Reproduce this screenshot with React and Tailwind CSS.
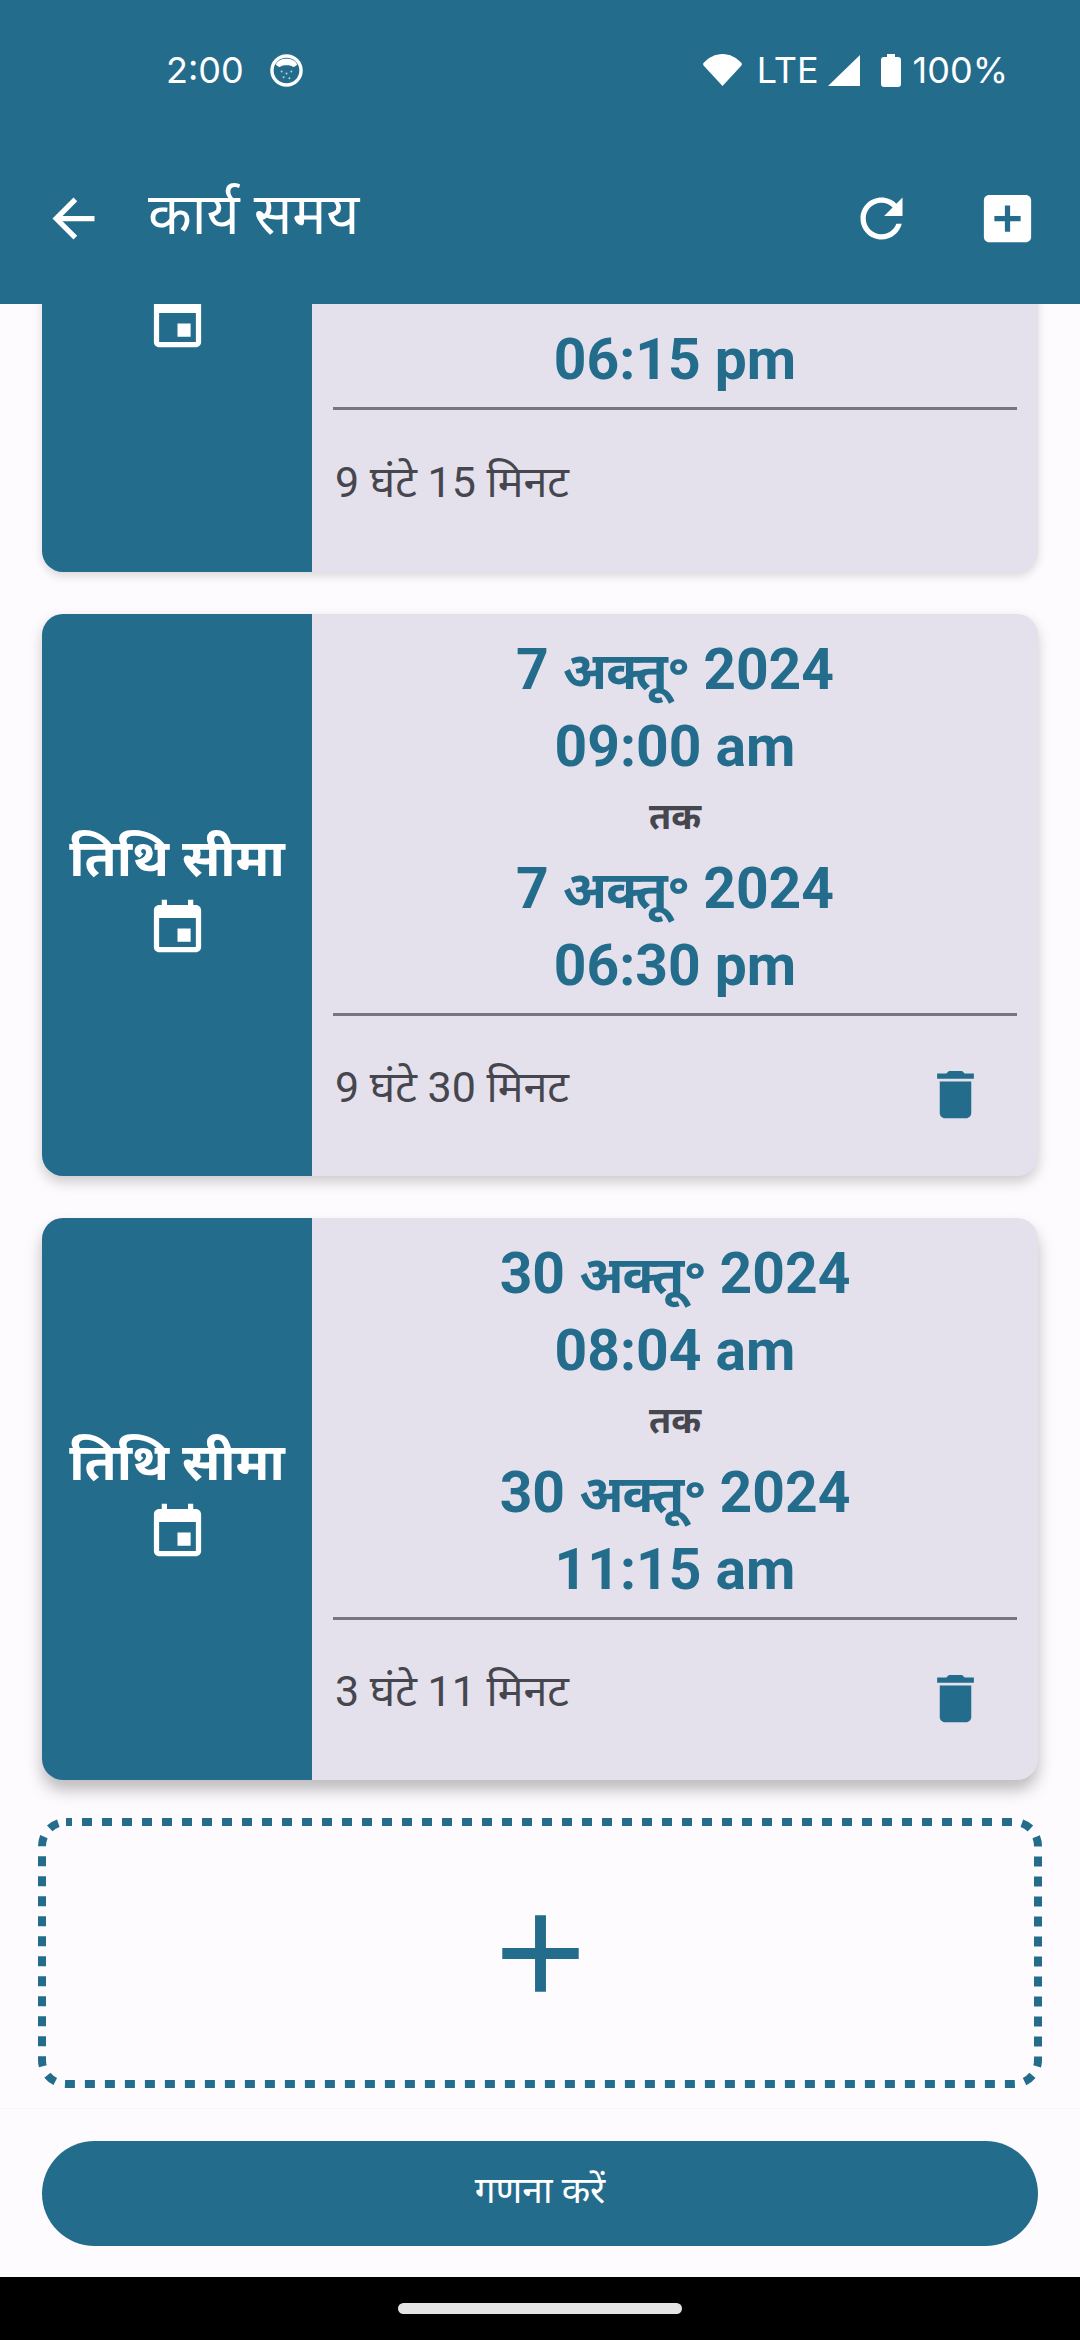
function Icono({ d, className }) {
  return (
    <svg viewBox="0 0 24 24" className={className} fill="currentColor">
      <path d={d} />
    </svg>
  );
}

const ICONOS = {
  atras: 'M20 11H7.83l5.59-5.59L12 4l-8 8 8 8 1.41-1.41L7.83 13H20v-2z',
  refrescar: 'M17.65 6.35C16.2 4.9 14.21 4 12 4c-4.42 0-7.99 3.58-7.99 8s3.57 8 7.99 8c3.73 0 6.84-2.55 7.73-6h-2.08c-.82 2.33-3.04 4-5.65 4-3.31 0-6-2.69-6-6s2.69-6 6-6c1.66 0 3.14.69 4.22 1.78L13 11h7V4l-2.35 2.35z',
  agregarCaja: 'M19 3H5c-1.11 0-2 .9-2 2v14c0 1.1.89 2 2 2h14c1.1 0 2-.9 2-2V5c0-1.1-.9-2-2-2zm-2 10h-4v4h-2v-4H7v-2h4V7h2v4h4v2z',
  evento: 'M17 12h-5v5h5v-5zM16 1v2H8V1H6v2H5c-1.11 0-1.99.9-1.99 2L3 19c0 1.1.89 2 2 2h14c1.1 0 2-.9 2-2V5c0-1.1-.9-2-2-2h-1V1h-2zm3 18H5V8h14v11z',
  borrar: 'M6 19c0 1.1.9 2 2 2h8c1.1 0 2-.9 2-2V7H6v12zM19 4h-3.5l-1-1h-5l-1 1H5v2h14V4z',
  mas: 'M19 13h-6v6h-2v-6H5v-2h6V5h2v6h6v2z',
};

// La sombra crece hacia abajo, igual que en la captura
const rangos = [
  { dia: '7', mes: 'सित॰', inicio: '09:00 am', fin: '06:15 pm', duracion: '9 घंटे 15 मिनट', borrar: false, sombra: 'shadow-[0_4px_10px_rgba(0,0,0,0.14)]' },
  { dia: '7', mes: 'अक्तू॰', inicio: '09:00 am', fin: '06:30 pm', duracion: '9 घंटे 30 मिनट', borrar: true, sombra: 'shadow-[0_6px_14px_rgba(0,0,0,0.2)]' },
  { dia: '30', mes: 'अक्तू॰', inicio: '08:04 am', fin: '11:15 am', duracion: '3 घंटे 11 मिनट', borrar: true, sombra: 'shadow-[0_10px_16px_rgba(0,0,0,0.26)]' },
];

function Fecha({ dia, mes }) {
  return (
    <div className="text-center text-[#246c8c] text-[57px] leading-[77px] font-bold">
      {dia} <span className="text-[52px] leading-[0] tracking-[-1px]">{mes}</span> 2024
    </div>
  );
}

function Tarjeta({ rango, primera }) {
  return (
    <div className={`flex shrink-0 rounded-[21px] overflow-hidden bg-[#e4e1ec] ${rango.sombra} ${primera ? 'h-[564px] -mt-[296px]' : 'h-[562px]'}`}>
      <div className="w-[270px] shrink-0 bg-[#246c8c] text-white flex flex-col items-center justify-center">
        <span className="text-[52px] leading-[68px] font-bold whitespace-nowrap -mt-[5px]">तिथि सीमा</span>
        <Icono d={ICONOS.evento} className="w-[63px] h-[63px] mt-[4px]" />
      </div>
      <div className="flex-1 flex flex-col pt-[17px] px-[21px] min-w-0">
        <Fecha dia={rango.dia} mes={rango.mes} />
        <div className="text-center text-[#246c8c] text-[57px] leading-[77px] font-bold">{rango.inicio}</div>
        <div className="text-center text-[#46464f] text-[36px] leading-[65px] font-bold">तक</div>
        <Fecha dia={rango.dia} mes={rango.mes} />
        <div className="text-center text-[#246c8c] text-[57px] leading-[77px] font-bold">{rango.fin}</div>
        <div className="h-[3px] bg-[#777680] mt-[9px]"></div>
        <div className="flex-1 flex items-center justify-between pl-[2px] pr-[30px] text-[#46464f]">
          <span className="text-[43px] leading-[60px] -mt-[18px]">{rango.duracion}</span>
          {rango.borrar && <Icono d={ICONOS.borrar} className="w-[63px] h-[63px] text-[#246c8c] -mt-[4px]" />}
        </div>
      </div>
    </div>
  );
}

export default function App() {
  return (
    <div className="w-[1080px] h-[2340px] flex flex-col overflow-hidden bg-[#fefbff] font-['Roboto','Noto_Sans',sans-serif]">
      {/* Cabecera */}
      <div className="h-[304px] shrink-0 bg-[#246c8c] text-white z-10">
        <div className="h-[140px] flex items-center justify-between pl-[166px] pr-[72px] font-['Inter',sans-serif]">
          <div className="flex items-center gap-[26px]">
            <span className="text-[36px] leading-none">2:00</span>
            <svg viewBox="0 0 34 34" className="w-[33px] h-[33px]">
              <circle cx="17" cy="17" r="15" fill="none" stroke="#fff" strokeWidth="3.5" />
              <path d="M6 11c3-8 19-8 22 0-2 1-3 3-5 2-2-2-10-2-12 0-2 1-3-1-5-2z" fill="#fff" />
              <circle cx="12" cy="18" r="1" fill="#fff" opacity="0.7" />
              <circle cx="17" cy="20" r="1" fill="#fff" opacity="0.7" />
              <circle cx="22" cy="18" r="1" fill="#fff" opacity="0.7" />
              <circle cx="14" cy="24" r="1" fill="#fff" opacity="0.7" />
              <circle cx="20" cy="25" r="1" fill="#fff" opacity="0.7" />
            </svg>
          </div>
          <div className="flex items-center">
            <svg viewBox="0 0 39 32" className="w-[39px] h-[32px] mr-[15px]">
              <path d="M19.5 32 1 12c-1.2-1.3-1.2-2.6 0-3.5C6 3.5 12 0 19.5 0S33 3.500 38 8.500c1.200.9 1.200 2.200 0 3.500z" fill="#fff" />
            </svg>
            <span className="text-[36px] leading-none mr-[9px]">LTE</span>
            <svg viewBox="0 0 32 31" className="w-[32px] h-[31px] mr-[21px]">
              <path d="M32 0v31H0z" fill="#fff" />
            </svg>
            <svg viewBox="0 0 20 33" className="w-[20px] h-[33px] mr-[12px]">
              <path d="M6 0h8v3h3c2 0 3 1 3 3v24c0 2-1 3-3 3H3c-2 0-3-1-3-3V6c0-2 1-3 3-3h3z" fill="#fff" />
            </svg>
            <span className="text-[36px] leading-none">100%</span>
          </div>
        </div>
        <div className="h-[156px] flex items-center pl-[42px] pr-[41px]">
          <Icono d={ICONOS.atras} className="w-[63px] h-[63px]" />
          <span className="ml-[43px] text-[57px] leading-[60px] -mt-[6px] flex-1">कार्य समय</span>
          <Icono d={ICONOS.refrescar} className="w-[63px] h-[63px] mr-[63px]" />
          <Icono d={ICONOS.agregarCaja} className="w-[63px] h-[63px]" />
        </div>
      </div>

      {/* Lista */}
      <div className="flex-1 min-h-0 overflow-hidden px-[42px] flex flex-col gap-[42px]">
        {rangos.map((r, i) => (
          <Tarjeta key={i} rango={r} primera={i === 0} />
        ))}
        <div className="relative shrink-0 -mx-[4px] -mt-[4px] h-[270px] flex items-center justify-center text-[#246c8c]">
          <svg viewBox="0 0 1004 270" className="absolute inset-0 w-full h-full" fill="none">
            <rect x="4" y="4" width="996" height="262" rx="24" stroke="#246c8c" strokeWidth="8" strokeDasharray="10 10" strokeDashoffset="4" />
          </svg>
          <Icono d={ICONOS.mas} className="w-[131px] h-[131px]" />
        </div>
      </div>

      {/* Boton inferior */}
      <div className="h-[169px] shrink-0 px-[42px] pt-[32px] bg-[#fefbff] border-t border-[#f8f5f9]">
        <div className="w-full h-[105px] rounded-full bg-[#246c8c] text-white flex items-center justify-center text-[37px]">
          <span className="-mt-[6px]">गणना करें</span>
        </div>
      </div>

      {/* Navegacion */}
      <div className="h-[63px] shrink-0 bg-black flex items-start justify-center">
        <div className="w-[284px] h-[11px] mt-[26px] rounded-full bg-[#e4e4e4]"></div>
      </div>
    </div>
  );
}
